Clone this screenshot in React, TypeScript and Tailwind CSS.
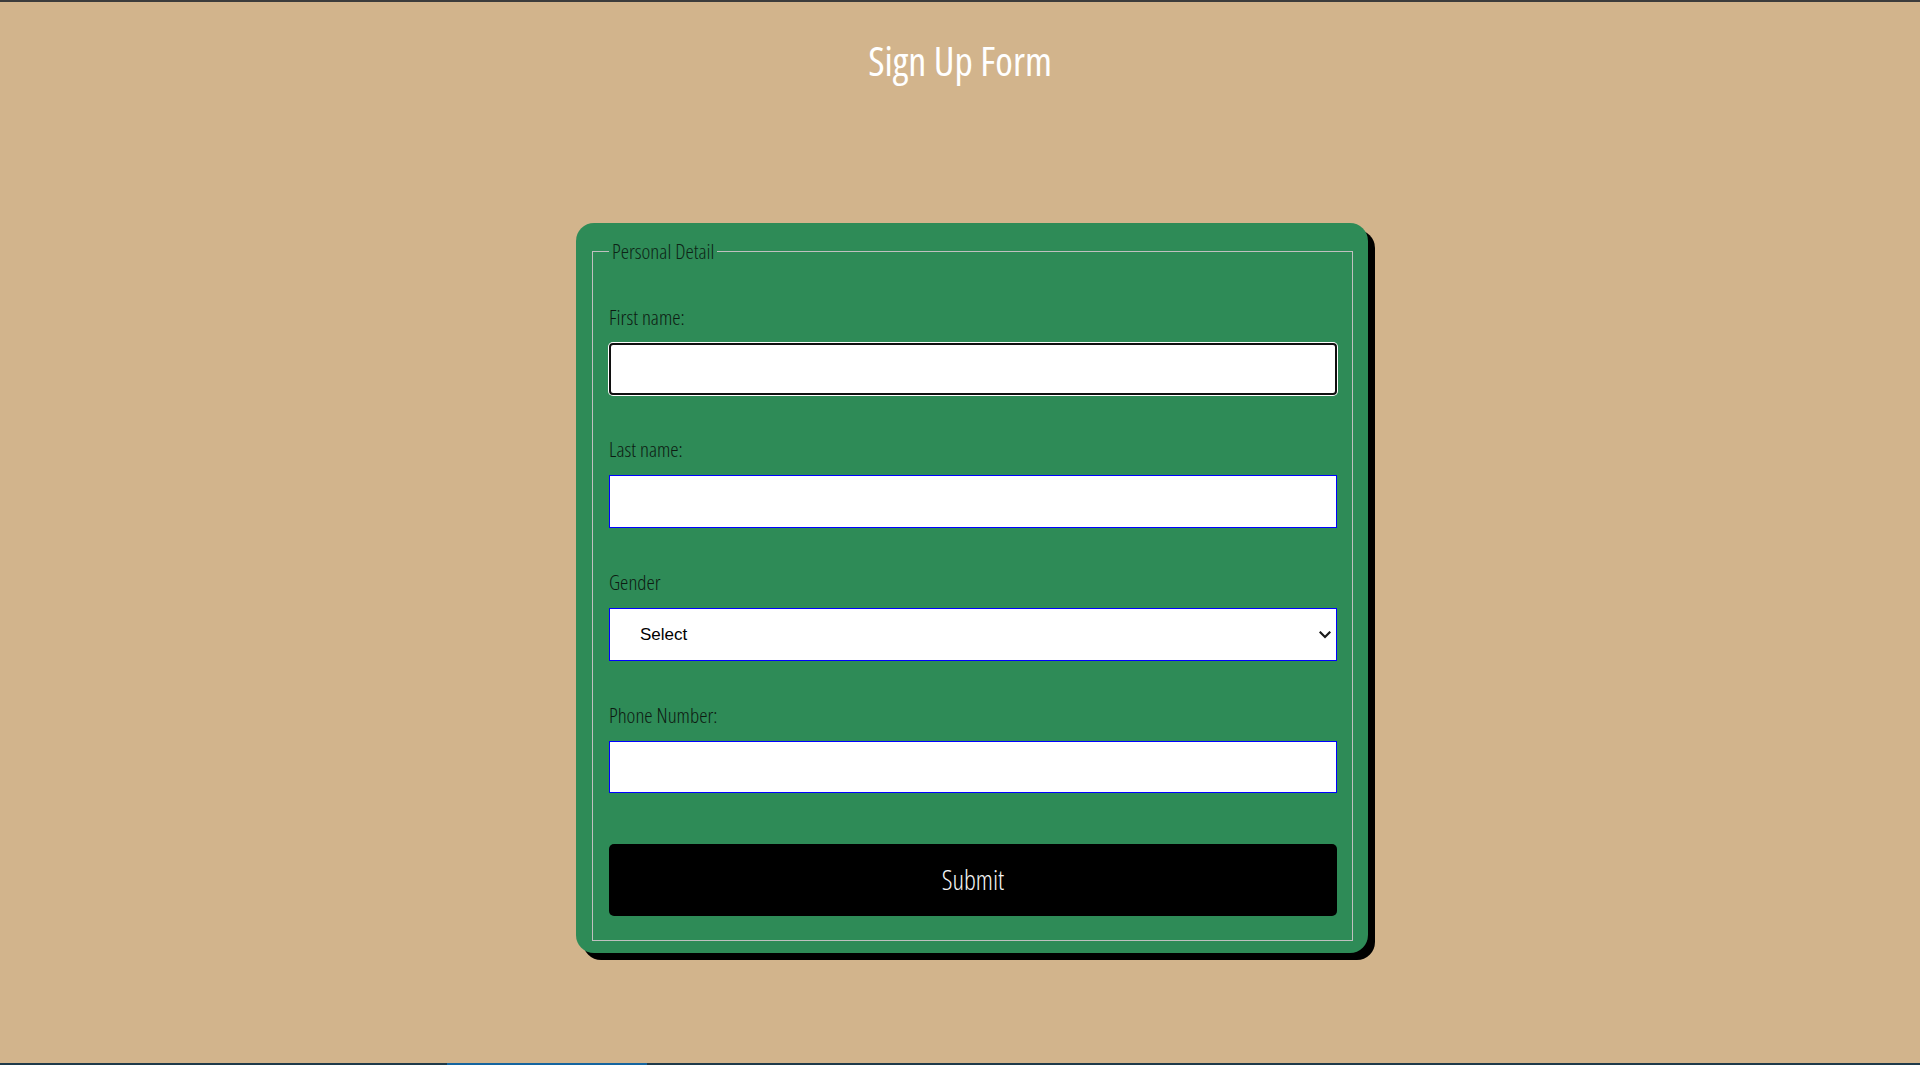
import { useState } from 'react';

const narrow = "font-['Open_Sans','DejaVu_Sans_Condensed',sans-serif] [font-stretch:75%]";

export default function App() {
  const [form, setForm] = useState({ firstName: '', lastName: '', gender: '', phone: '' });

  const update = (key: keyof typeof form) => (e: React.ChangeEvent<HTMLInputElement | HTMLSelectElement>) =>
    setForm((prev) => ({ ...prev, [key]: e.target.value }));

  return (
    <div className="min-h-[1065px] bg-[#d2b48c] flex flex-col border-t-2 border-[#3c3c3c] relative">
      {/* Header */}
      <h1 className={`${narrow} text-white text-center text-[40px] font-medium leading-[48px] pt-[35px]`}>Sign Up Form</h1>

      {/* Card */}
      <div className="mt-[138px] ml-[576px] w-[792px] rounded-[18px] bg-[#2e8b57] shadow-[7px_7px_0_0_#000] pl-4 pr-[15px] pt-3 pb-3">
        <form onSubmit={(e) => e.preventDefault()}>
          <fieldset className="border border-[#c0c0c0] pl-4 pr-[15px] pb-6">
            <legend className={`${narrow} px-[3px] text-[21px] font-light text-[#0d2416] leading-[32px]`}>Personal Detail</legend>

            <div className="pt-[34px]">
              <label htmlFor="fname" className={`${narrow} block text-[21px] font-light leading-[32px] text-[#0d1a12] mb-[10px]`}>
                First name:
              </label>
              <input
                id="fname"
                type="text"
                autoFocus
                value={form.firstName}
                onChange={update('firstName')}
                className="w-full h-[52px] bg-white border-2 border-[#101010] rounded-[4px] shadow-[0_0_0_1px_#fff] px-6 text-[17px] outline-none font-['Liberation_Sans',sans-serif]"
              />
            </div>

            <div className="mt-[38px]">
              <label htmlFor="lname" className={`${narrow} block text-[21px] font-light leading-[32px] text-[#0d1a12] mb-[10px]`}>
                Last name:
              </label>
              <input
                id="lname"
                type="text"
                value={form.lastName}
                onChange={update('lastName')}
                className="w-full h-[53px] bg-white border border-[#0000ff] px-6 text-[17px] outline-none font-['Liberation_Sans',sans-serif]"
              />
            </div>

            <div className="mt-[38px]">
              <label htmlFor="gender" className={`${narrow} block text-[21px] font-light leading-[32px] text-[#0d1a12] mb-[10px]`}>
                Gender
              </label>
              <div className="relative">
                <select
                  id="gender"
                  value={form.gender}
                  onChange={update('gender')}
                  className="appearance-none w-full h-[53px] bg-white border border-[#0000ff] pl-[30px] pr-8 text-[17px] text-black outline-none font-['Liberation_Sans',sans-serif]"
                >
                  <option value="">Select</option>
                  <option value="male">Male</option>
                  <option value="female">Female</option>
                </select>
                <svg
                  className="pointer-events-none absolute right-[6px] top-1/2 -translate-y-1/2 w-[12px] h-[8px]"
                  viewBox="0 0 12 8"
                  fill="none"
                >
                  <path d="M1.5 1.5 L6 6 L10.5 1.5" stroke="#1a1a1a" strokeWidth="2.2" strokeLinecap="square" />
                </svg>
              </div>
            </div>

            <div className="mt-[38px]">
              <label htmlFor="phone" className={`${narrow} block text-[21px] font-light leading-[32px] text-[#0d1a12] mb-[10px]`}>
                Phone Number:
              </label>
              <input
                id="phone"
                type="tel"
                value={form.phone}
                onChange={update('phone')}
                className="w-full h-[52px] bg-white border border-[#0000ff] px-6 text-[17px] outline-none font-['Liberation_Sans',sans-serif]"
              />
            </div>

            <button
              type="submit"
              className={`${narrow} mt-[51px] w-full h-[72px] rounded-[5px] bg-black text-[#f4f4f4] text-[27px] font-light`}
            >
              Submit
            </button>
          </fieldset>
        </form>
      </div>

      {/* Bottom bar */}
      <div className="absolute bottom-0 left-0 right-0 h-[2px] bg-[#1e3a4a]">
        <div className="ml-[447px] w-[200px] h-full bg-[#1565a0]" />
      </div>
    </div>
  );
}
